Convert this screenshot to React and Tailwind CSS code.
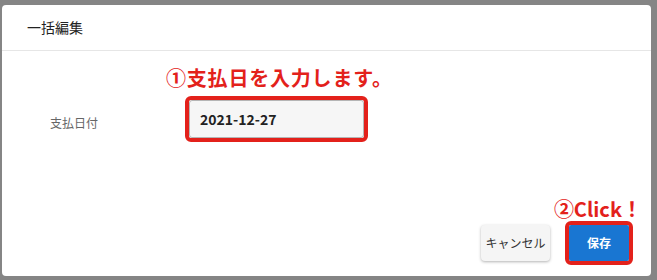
export default function App() {
  const font = { fontFamily: '"Noto Sans CJK JP", "Noto Sans", sans-serif' };
  return (
    <div className="w-[657px] h-[280px] bg-[#858585] pt-[5px] pl-[2px] pr-[6px] pb-[4px]" style={font}>
      <div className="w-full h-full bg-white rounded-[4px] flex flex-col">
        <div className="h-[46px] flex items-center pl-[25px] border-b border-[#e6e6e6] text-[14px] text-[#222]">
          一括編集
        </div>
        <div className="mt-[15px] pl-[164px] h-[24px] flex items-center text-[20px] font-bold text-[#e3211b] leading-none tracking-[0.8px]">
          ①支払日を入力します。
        </div>
        <div className="mt-[6px] flex items-center">
          <div className="w-[183px] pl-[48px] pt-[8px] text-[12px] text-[#666]">支払日付</div>
          <div className="w-[183px] h-[46px] border-4 border-[#e3211b] rounded-[6px] p-0">
            <div className="w-full h-full bg-[#f6f6f6] border border-[#b5b5b5] rounded-[3px] flex items-center pl-[10px] text-[14px] font-bold text-[#222]">
              2021-12-27
            </div>
          </div>
        </div>
        <div className="mt-[55px] h-[24px] flex items-center justify-end pr-[9px] text-[20px] font-bold text-[#e3211b] leading-none">
          ②Click！
        </div>
        <div className="flex items-center justify-end pr-[18px]">
          <div className="w-[69px] h-[36px] mr-[15px] bg-[#f5f5f5] rounded-[4px] shadow-[0_1px_3px_rgba(0,0,0,0.3)] flex items-center justify-center text-[12px] text-[#333]">
            キャンセル
          </div>
          <div className="w-[68px] h-[44px] border-4 border-[#e3211b] rounded-[6px]">
            <div className="w-full h-full bg-[#1976d2] rounded-[2px] flex items-center justify-center text-[12px] font-bold text-white">
              保存
            </div>
          </div>
        </div>
      </div>
    </div>
  );
}
